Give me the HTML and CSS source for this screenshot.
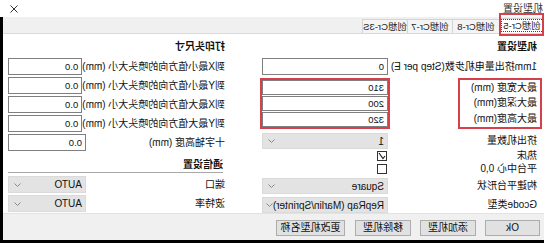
FILE: index.html
```html
<!DOCTYPE html>
<html lang="zh-CN">
<head>
    <meta charset="UTF-8">
    <meta name="viewport" content="width=device-width, initial-scale=1.0">
    <title>机型设置</title>

    <link rel="stylesheet" href="styles.css">
</head>
<body>
    <div class="titlebar">
        <span class="title">机型设置</span>
        <svg class="close" width="8" height="8" viewBox="0 0 8 8">
            <path d="M0.5 0.5 L7.5 7.5 M7.5 0.5 L0.5 7.5" stroke="#333" stroke-width="1" fill="none"/>
        </svg>
    </div>

    <div class="window">
        <div class="tabs">
            <div class="tab active"><span>创想Cr-5</span></div>
            <div class="tab">创想Cr-8</div>
            <div class="tab">创想Cr-7</div>
            <div class="tab">创想Cr-3S</div>
        </div>

        <div class="panel">
            <div class="col machine">
                <h2>机型设置</h2>
                <div class="row h17">
                    <label>1mm挤出量电机步数(Step per E)</label>
                    <div class="field input">0</div>
                </div>

                <div class="marked">
                    <div class="marked-labels">
                        <label>最大宽度 (mm)</label>
                        <label>最大深度(mm)</label>
                        <label>最大高度(mm)</label>
                    </div>
                    <div class="marked-inputs">
                        <div class="field input">310</div>
                        <div class="field input">200</div>
                        <div class="field input">320</div>
                    </div>
                </div>

                <div class="row h16 extruders">
                    <label>挤出机数量</label>
                    <div class="field select"><span>1</span><svg width="7" height="4" viewBox="0 0 7 4"><path d="M0.5 0.5 L3.5 3.5 L6.5 0.5" stroke="#888" fill="none"/></svg></div>
                </div>
                <div class="row check-row heatbed">
                    <label>热床</label>
                    <div class="field plain">
                        <span class="checkbox">
                            <svg width="8" height="8" viewBox="0 0 8 8"><path d="M1 4 L3 6.5 L7 1" stroke="#222" stroke-width="1.2" fill="none"/></svg>
                        </span>
                    </div>
                </div>
                <div class="row check-row center">
                    <label>平台中心 0,0</label>
                    <div class="field plain"><span class="checkbox"></span></div>
                </div>
                <div class="row h16 shape">
                    <label>构建平台形状</label>
                    <div class="field select"><span>Square</span><svg width="7" height="4" viewBox="0 0 7 4"><path d="M0.5 0.5 L3.5 3.5 L6.5 0.5" stroke="#888" fill="none"/></svg></div>
                </div>
                <div class="row h16 gcode">
                    <label>Gcode类型</label>
                    <div class="field select"><span>RepRap (Marlin/Sprinter)</span><svg width="7" height="4" viewBox="0 0 7 4"><path d="M0.5 0.5 L3.5 3.5 L6.5 0.5" stroke="#888" fill="none"/></svg></div>
                </div>
            </div>

            <div class="col head">
                <h2>打印头尺寸</h2>
                <div class="row h17">
                    <label>到X最小值方向的喷头大小 (mm)</label>
                    <div class="field input">0.0</div>
                </div>
                <div class="row h17 gap2">
                    <label>到Y最小值方向的喷头大小 (mm)</label>
                    <div class="field input">0.0</div>
                </div>
                <div class="row h17 gap2">
                    <label>到X最大值方向的喷头大小 (mm)</label>
                    <div class="field input">0.0</div>
                </div>
                <div class="row h17 gap2">
                    <label>到Y最大值方向的喷头大小 (mm)</label>
                    <div class="field input">0.0</div>
                </div>
                <div class="row h17 gap2">
                    <label>十字轴高度 (mm)</label>
                    <div class="field input">0.0</div>
                </div>

                <h3>通信设置</h3>
                <div class="row h17 port">
                    <label>端口</label>
                    <div class="field select"><span>AUTO</span><svg width="7" height="4" viewBox="0 0 7 4"><path d="M0.5 0.5 L3.5 3.5 L6.5 0.5" stroke="#888" fill="none"/></svg></div>
                </div>
                <div class="row h17 gap2">
                    <label>波特率</label>
                    <div class="field select"><span>AUTO</span><svg width="7" height="4" viewBox="0 0 7 4"><path d="M0.5 0.5 L3.5 3.5 L6.5 0.5" stroke="#888" fill="none"/></svg></div>
                </div>
            </div>
        </div>

        <div class="footer">
            <button class="btn ok">Ok</button>
            <button class="btn">添加机型</button>
            <button class="btn">移除机型</button>
            <button class="btn wide">更改机型名称</button>
        </div>
    </div>
</body>
</html>
```

FILE: styles.css
```css
html {
    overflow: hidden;
}

/* the whole screenshot is a mirror image, so the page is flipped */
body {
    margin: 0;
    width: 544px;
    height: 243px;
    background-color: #000;
    font-family: "Liberation Sans", "Noto Sans CJK SC", sans-serif;
    font-size: 10px;
    color: #111;
    display: flex;
    flex-direction: column;
    transform: scaleX(-1);
    overflow: hidden;
}

.titlebar {
    height: 17px;
    flex-shrink: 0;
    background-color: #fff;
    display: flex;
    align-items: center;
    justify-content: space-between;
    padding-right: 10px;
    overflow: hidden;
}

.title {
    margin-left: 1px;
    color: #333;
    line-height: 14px;
}

.window {
    width: 541px;
    height: 223px;
    background-color: #f0f0f0;
    display: flex;
    flex-direction: column;
}

.tabs {
    height: 17px;
    box-sizing: border-box;
    display: flex;
    align-items: flex-end;
    border-bottom: 1px solid #d9d9d9;
}

.tab {
    position: relative;
    width: 45px;
    height: 14px;
    box-sizing: border-box;
    border: 1px solid #d4d4d4;
    border-bottom: none;
    border-left: none;
    background-color: #f4f4f4;
    font-size: 9.5px;
    line-height: 13px;
    text-align: center;
    color: #222;
}

.tab.active {
    width: 45px;
    height: 15px;
    background-color: #fff;
}

.tab.active span {
    outline: 1px dotted #444;
    padding: 0 1px;
}

.tab.active::after {
    content: "";
    position: absolute;
    top: -6px;
    left: 0;
    right: -1px;
    bottom: -3px;
    border: 2px solid #d5404a;
}

.tab:nth-child(2) { width: 47px; }

.panel {
    height: 180px;
    box-sizing: border-box;
    background-color: #fff;
    border-bottom: 1px solid #e2e2e2;
    display: flex;
    gap: 37px;
    padding: 6px 5px 0 7px;
}

.col {
    display: flex;
    flex-direction: column;
}

.machine { width: 275px; }
.head { width: 217px; }

h2 {
    margin: 0;
    height: 18px;
    font-size: 10px;
    font-weight: bold;
    line-height: 14px;
}

h3 {
    margin: 7px 0 0 2px;
    font-size: 10px;
    font-weight: bold;
    line-height: 14px;
    border-bottom: 1px solid #a8a8a8;
}

.row {
    display: flex;
    align-items: center;
}

.row label {
    flex: 1;
    white-space: nowrap;
    line-height: 14px;
}

.h17 { height: 17px; }
.h16 { height: 16px; }
.gap2 { margin-top: 2px; }

.field {
    height: 100%;
    box-sizing: border-box;
    font-size: 10px;
    display: flex;
    align-items: center;
    white-space: nowrap;
}

.machine .field { width: 126px; }
.head .field { width: 78px; }

.input {
    border: 1px solid #7f7f7f;
    background-color: #fff;
    padding-left: 3px;
    font-size: 9.5px;
}

.select {
    background-color: #e3e3e3;
    border: 1px solid #dadada;
    padding: 0 5px 0 3px;
    justify-content: space-between;
}

.select svg {
    flex-shrink: 0;
}

.plain {
    align-items: center;
}

.marked {
    display: flex;
    justify-content: space-between;
    margin: 3px -2px 0 -5px;
    height: 51px;
}

.marked-labels {
    width: 84px;
    box-sizing: border-box;
    border: 2px solid #d5404a;
    padding-left: 3px;
    display: flex;
    flex-direction: column;
    justify-content: space-around;
}

.marked-labels label {
    line-height: 14px;
    white-space: nowrap;
}

.marked-inputs {
    width: 130px;
    box-sizing: border-box;
    border: 2px solid #d5404a;
    display: flex;
    flex-direction: column;
    gap: 1px;
}

.marked-inputs .field {
    width: 126px;
    height: 15px;
}

.extruders { margin-top: 4px; }
.heatbed { margin-top: 1px; height: 12px; }
.center { height: 14px; }
.shape { margin-top: 2px; }
.gcode { margin-top: 3px; }
.port { margin-top: 3px; }

.checkbox {
    width: 10px;
    height: 10px;
    box-sizing: border-box;
    border: 1px solid #333;
    margin-left: 1px;
    display: flex;
    align-items: center;
    justify-content: center;
    background-color: #fff;
}

.footer {
    height: 26px;
    box-sizing: border-box;
    padding: 6px 0 0 4px;
    display: flex;
    align-items: flex-start;
    gap: 9px;
}

.btn {
    height: 16px;
    width: 56px;
    padding: 0;
    border: 1px solid #adadad;
    background-color: #e1e1e1;
    font-family: "Liberation Sans", "Noto Sans CJK SC", sans-serif;
    font-size: 10px;
    line-height: 14px;
    color: #111;
}

.btn.ok { width: 55px; }
.btn.wide { width: 69px; margin-left: 1px; }
```
